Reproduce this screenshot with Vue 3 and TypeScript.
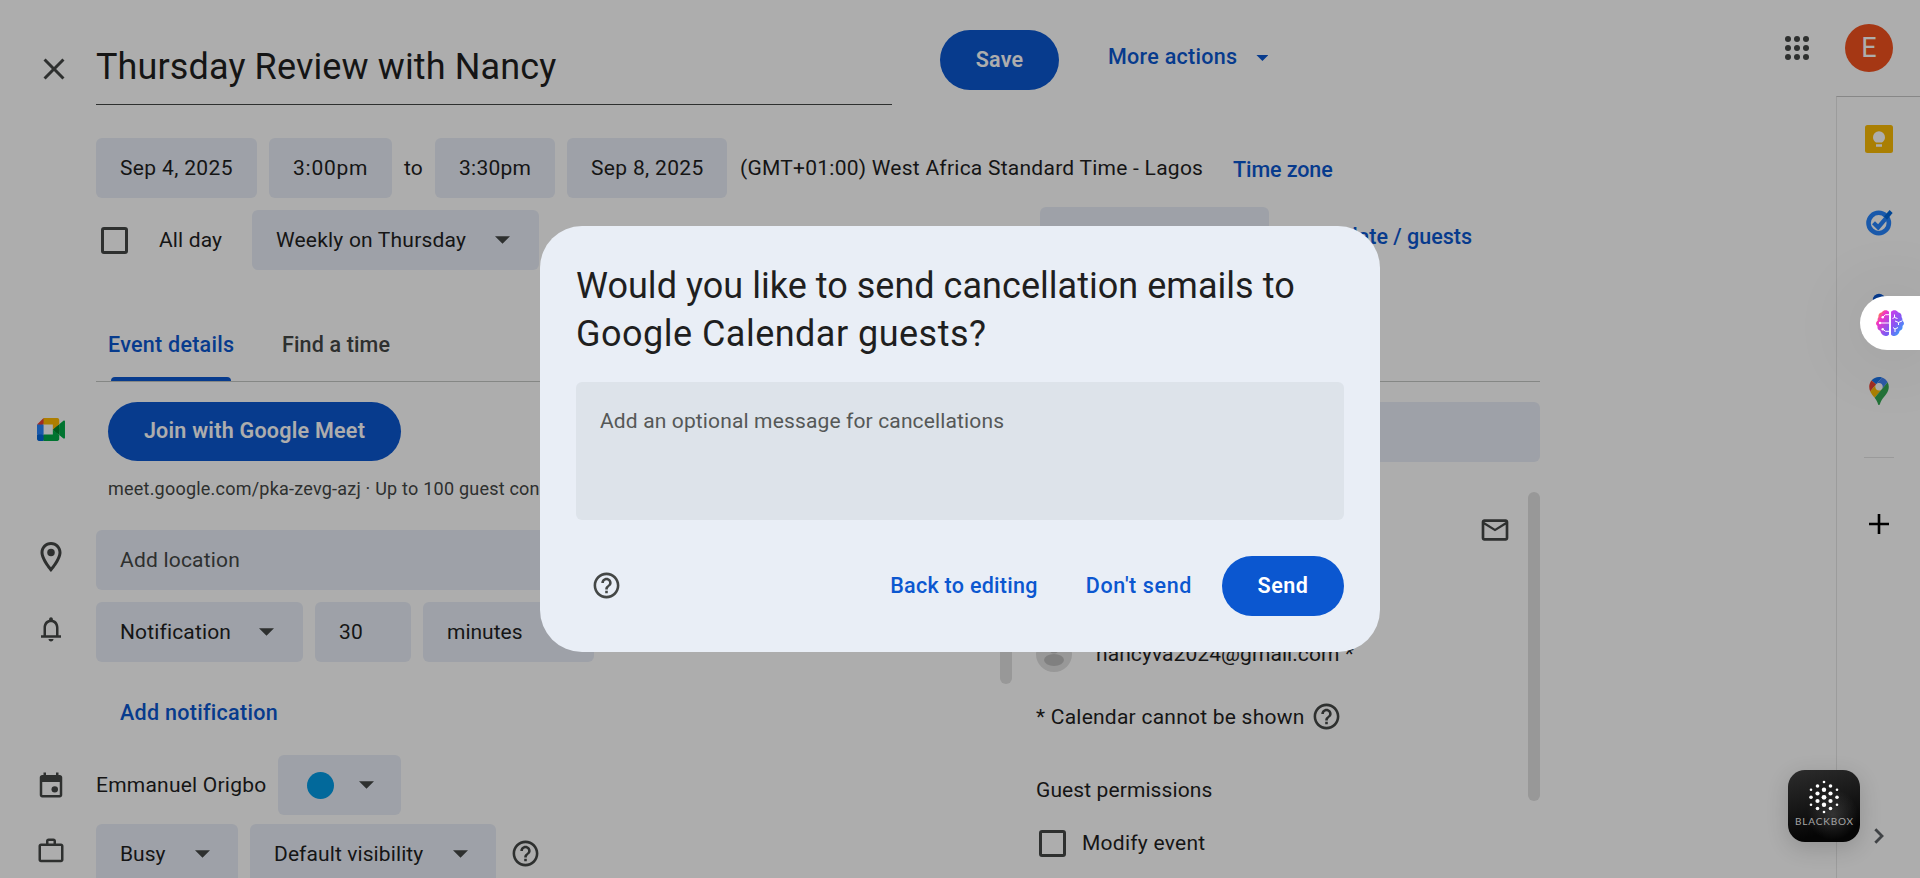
<script setup lang="ts">
import { ref } from 'vue'

const title = ref('Thursday Review with Nancy')
const message = ref('')

const HELP =
  'M11 18h2v-2h-2v2zm1-16C6.48 2 2 6.48 2 12s4.48 10 10 10 10-4.48 10-10S17.52 2 12 2zm0 18c-4.41 0-8-3.59-8-8s3.59-8 8-8 8 3.59 8 8-3.59 8-8 8zm0-14c-2.21 0-4 1.79-4 4h2c0-1.1.9-2 2-2s2 .9 2 2c0 2-3 1.75-3 5h2c0-2.25 3-2.5 3-5 0-2.21-1.79-4-4-4z'

interface Dot {
  x: number
  y: number
  r: number
}
// Hexagonal lattice whose dots grow towards the centre
const dots: Dot[] = [
  { x: 36, y: 12, r: 1.3 }, { x: 29.5, y: 16, r: 1.8 }, { x: 42.5, y: 16, r: 1.8 },
  { x: 23, y: 19.8, r: 1.3 }, { x: 36, y: 19.8, r: 2.2 }, { x: 49, y: 19.8, r: 1.3 },
  { x: 29.5, y: 23.5, r: 2.1 }, { x: 42.5, y: 23.5, r: 2.1 },
  { x: 23, y: 27.3, r: 1.8 }, { x: 36, y: 27.3, r: 2.4 }, { x: 49, y: 27.3, r: 1.8 },
  { x: 29.5, y: 31, r: 2.1 }, { x: 42.5, y: 31, r: 2.1 },
  { x: 23, y: 34.8, r: 1.3 }, { x: 36, y: 34.8, r: 2.2 }, { x: 49, y: 34.8, r: 1.3 },
  { x: 29.5, y: 38.5, r: 1.8 }, { x: 42.5, y: 38.5, r: 1.8 }, { x: 36, y: 42, r: 1.3 },
]
</script>

<template>
  <div class="page">
    <main class="editor">
      <header class="top">
        <svg class="close" viewBox="0 0 24 24"><path d="M19 6.41L17.59 5 12 10.59 6.41 5 5 6.41 10.59 12 5 17.59 6.41 19 12 13.41 17.59 19 19 17.59 13.41 12z" /></svg>
        <div class="title">{{ title }}</div>
        <button class="primary save">Save</button>
        <div class="more link"><span>More actions</span><i class="caret small"></i></div>
      </header>

      <div class="row when">
        <div class="field f-date">Sep 4, 2025</div>
        <div class="field f-start">3:00pm</div>
        <span class="to">to</span>
        <div class="field f-end">3:30pm</div>
        <div class="field f-date2">Sep 8, 2025</div>
        <span class="zone">(GMT+01:00) West Africa Standard Time - Lagos</span>
        <span class="link tz">Time zone</span>
      </div>

      <div class="row repeat">
        <i class="check"></i>
        <span class="allday">All day</span>
        <div class="field f-weekly"><span>Weekly on Thursday</span><i class="caret"></i></div>
        <div class="field f-guest-tab"></div>
        <span class="link update">Update / guests</span>
      </div>

      <nav class="tabs">
        <div class="tab active"><span>Event details</span></div>
        <div class="tab"><span>Find a time</span></div>
      </nav>

      <div class="body">
        <section class="details">
          <div class="line">
            <div class="ico meet">
              <svg viewBox="0 0 87.5 72">
                <path fill="#00832d" d="M49.5 36l8.53 9.75 11.47 7.33 2-17.02-2-16.64-11.69 6.44z" />
                <path fill="#0066da" d="M0 51.5V66c0 3.315 2.685 6 6 6h14.5l3-10.96-3-9.54-9.95-3z" />
                <path fill="#e94235" d="M20.5 0L0 20.5l10.55 3 9.95-3 2.95-9.41z" />
                <path fill="#2684fc" d="M20.5 20.5H0v31h20.5z" />
                <path fill="#00ac47" d="M82.6 8.68L69.5 19.42v33.66l13.16 10.79c1.97 1.54 4.85.135 4.85-2.37V11c0-2.535-2.945-3.925-4.91-2.32zM49.5 36v15.5h-29V72h43c3.315 0 6-2.685 6-6V53.08z" />
                <path fill="#ffba00" d="M63.5 0h-43v20.5h29V36l20-16.57V6c0-3.315-2.685-6-6-6z" />
              </svg>
            </div>
            <button class="primary join">Join with Google Meet</button>
          </div>
          <p class="meet-url">meet.google.com/pka-zevg-azj · Up to 100 guest connections</p>

          <div class="line location">
            <div class="ico pin"><svg viewBox="0 0 24 24"><path d="M12 2C8.13 2 5 5.13 5 9c0 5.25 7 13 7 13s7-7.75 7-13c0-3.87-3.13-7-7-7zM7 9c0-2.76 2.24-5 5-5s5 2.24 5 5c0 2.88-2.88 7.19-5 9.88C9.92 16.21 7 11.85 7 9z" /><circle cx="12" cy="9" r="2.5" /></svg></div>
            <div class="field f-loc">Add location</div>
          </div>

          <div class="line notify">
            <div class="ico bell"><svg viewBox="0 0 24 24"><path d="M20 17h-2v-6c0-3.07-1.63-5.64-4.5-6.32V4c0-.83-.67-1.5-1.5-1.5s-1.5.67-1.5 1.5v.68C7.64 5.36 6 7.92 6 11v6H4v2h16v-2zm-4 0H8v-6c0-2.48 1.51-4.5 4-4.5s4 2.02 4 4.5v6zM12 22c1.1 0 2-.9 2-2h-4c0 1.1.89 2 2 2z" /></svg></div>
            <div class="field f-notif"><span>Notification</span><i class="caret"></i></div>
            <div class="field f-num">30</div>
            <div class="field f-unit">minutes</div>
          </div>
          <span class="link add-notif">Add notification</span>

          <div class="line calendar">
            <div class="ico"><svg viewBox="0 0 24 24"><path d="M19 4h-1V2h-2v2H8V2H6v2H5c-1.1 0-2 .9-2 2v14c0 1.1.9 2 2 2h14c1.1 0 2-.9 2-2V6c0-1.1-.9-2-2-2zm0 16H5V9.500h14V20z" /><circle cx="15" cy="15.500" r="2.600" /></svg></div>
            <span class="owner">Emmanuel Origbo</span>
            <div class="field f-color"><i class="dot"></i><i class="caret"></i></div>
          </div>

          <div class="line busy">
            <div class="ico bag"><svg viewBox="0 0 24 24"><path d="M14 6V4h-4v2h4zM4 8v11h16V8H4zm16-2c1.110 0 2 .890 2 2v11c0 1.110-.890 2-2 2H4c-1.110 0-2-.890-2-2V8c0-1.110.890-2 2-2h4V4c0-1.110.890-2 2-2h4c1.110 0 2 .890 2 2v2h4z" /></svg></div>
            <div class="field f-busy"><span>Busy</span><i class="caret"></i></div>
            <div class="field f-vis"><span>Default visibility</span><i class="caret"></i></div>
            <svg class="help" viewBox="0 0 24 24"><path :d="HELP" /></svg>
          </div>
        </section>
        <i class="scroll left"></i>

        <section class="guests">
          <div class="field f-add"></div>
          <div class="guest-scroll">
            <div class="guest-list">
              <div class="mail"><svg viewBox="0 0 24 24"><path d="M22 6c0-1.100-.900-2-2-2H4c-1.100 0-2 .900-2 2v12c0 1.100.900 2 2 2h16c1.100 0 2-.900 2-2V6zm-2 0l-8 5-8-5h16zm0 12H4V8l8 5 8-5v10z" /></svg></div>
              <div class="guest">
                <svg class="avatar" viewBox="0 0 36 36"><circle cx="18" cy="18" r="18" fill="#e0e0e0" /><circle cx="18" cy="12" r="5.500" fill="#bdbdbd" /><ellipse cx="18" cy="24" rx="10" ry="6" fill="#bdbdbd" /></svg>
                <span>nancyva2024@gmail.com *</span>
              </div>
              <div class="note"><span>* Calendar cannot be shown</span><svg class="help" viewBox="0 0 24 24"><path :d="HELP" /></svg></div>
              <div class="perm">Guest permissions</div>
              <div class="modify"><i class="check"></i><span>Modify event</span></div>
            </div>
            <i class="scroll right"></i>
          </div>
        </section>
      </div>
    </main>

    <div class="rail">
      <div class="account">
        <svg class="apps" viewBox="0 0 24 24">
          <template v-for="y in 3" :key="y"><circle v-for="x in 3" :key="x" :cx="x * 9 - 6" :cy="y * 9 - 6" r="3" /></template>
        </svg>
        <div class="me">E</div>
      </div>
      <aside class="side">
        <svg class="app keep" viewBox="0 0 28 28"><rect width="28" height="28" rx="2.500" fill="#fbbc04" /><path fill="#fff" d="M14 6.300a6 6 0 0 0-6 6c0 2.300 1.200 4.200 3 5.200h6c1.800-1 3-2.900 3-5.200a6 6 0 0 0-6-6zM11 19.300h6v2.400h-6z" /></svg>
        <svg class="app" viewBox="0 0 28 28"><circle cx="13.700" cy="14" r="10.200" fill="none" stroke="#2684fc" stroke-width="4.600" /><path d="M8.500 13.800l4.700 4.500 8.300-9.700" fill="none" stroke="#2684fc" stroke-width="4.300" /><path d="M19 7.500L24.600 1l3 3L22 10.700z" fill="#0066da" /></svg>
        <svg class="app" viewBox="0 0 28 28"><circle cx="14" cy="7" r="6.200" fill="#0b57d0" /><path fill="#2684fc" d="M2 26c0-7 5-10 12-10s12 3 12 10z" /></svg>
        <svg class="app" viewBox="0 0 92.3 132.3">
          <path fill="#1a73e8" d="M60.2 2.2C55.8.8 51 0 46.1 0 32 0 19.3 6.4 10.8 16.5l21.800 18.300L60.200 2.200z" />
          <path fill="#ea4335" d="M10.8 16.5C4.100 24.500 0 34.900 0 46.100c0 8.700 1.700 15.700 4.600 22l28-33.300-21.800-18.300z" />
          <path fill="#4285f4" d="M46.2 28.5c9.800 0 17.700 7.900 17.700 17.700 0 4.300-1.600 8.300-4.200 11.400 0 0 13.900-16.600 27.500-32.700-5.600-10.800-15.300-19-27-22.700L32.600 34.800c3.300-3.800 8.100-6.300 13.600-6.300" />
          <path fill="#fbbc04" d="M46.2 63.800c-9.800 0-17.700-7.900-17.700-17.700 0-4.300 1.500-8.300 4.100-11.300l-28 33.300c4.800 10.600 12.800 19.200 21 29.900l34.100-40.500c-3.300 3.900-8.100 6.300-13.500 6.300" />
          <path fill="#34a853" d="M59.1 109.200c15.400-24.100 33.300-35 33.300-63 0-7.700-1.900-14.900-5.200-21.300L25.600 98c2.600 3.400 5.300 7.300 7.900 11.300 9.400 14.500 6.800 23.100 12.800 23.100s3.400-8.700 12.800-23.200" />
        </svg>
        <i class="rule"></i>
        <svg class="plus" viewBox="0 0 20 20"><path d="M10 0v20M0 10h20" /></svg>
        <svg class="chevron" viewBox="0 0 10 16"><path d="M1.300 1.200L8 8l-6.700 6.800" /></svg>
      </aside>
    </div>

    <div class="scrim">
      <div class="dialog">
        <h2><span class="l1">Would you like to send cancellation emails to</span> <span class="l2">Google Calendar guests?</span></h2>
        <textarea v-model="message" class="message" placeholder="Add an optional message for cancellations"></textarea>
        <div class="actions">
          <svg class="help" viewBox="0 0 24 24"><path :d="HELP" /></svg>
          <span class="link back">Back to editing</span>
          <span class="link dont">Don't send</span>
          <button class="primary send">Send</button>
        </div>
      </div>
    </div>

    <div class="brain">
      <svg viewBox="0 0 28 26">
        <defs>
          <linearGradient id="bl" x1="0" y1="0" x2=".7" y2="1"><stop offset="0" stop-color="#ffa01e" /><stop offset=".15" stop-color="#ff8a3c" /><stop offset=".4" stop-color="#f233c8" /><stop offset="1" stop-color="#7a5cf5" /></linearGradient>
          <linearGradient id="br" x1="0" y1="0" x2=".7" y2="1"><stop offset="0" stop-color="#d13bea" /><stop offset=".5" stop-color="#8a55f2" /><stop offset="1" stop-color="#2fa4fb" /></linearGradient>
        </defs>
        <path fill="url(#bl)" d="M13 1.800C11.500-.4 7.500-.4 6 2.200 3.500 2.500 2 4.700 2.500 7 1.600 8 1.400 9.300 1.700 10.400-.5 12-.5 14.600 1.500 16c-.4 2.500.8 4.300 2.800 4.800C5 24 7 26 9.600 26c1.400 0 2.600-.5 3.400-1.600z" />
        <path fill="url(#br)" d="M15 1.800c1.500-2.200 5.500-2.200 7 .4 2.500.3 4 2.500 3.500 4.800.9 1 1.100 2.300.8 3.400 2.200 1.600 2.200 4.200.2 5.600.4 2.500-.8 4.300-2.800 4.800C23 24 21 26 18.400 26c-1.400 0-2.600-.5-3.400-1.600z" />
        <g fill="none" stroke="#fff" stroke-width="1"><path d="M13 4.700H9.500L7 7M13 13H4M13 21.300H9.500L7 19.300M18.500 4.500v3l-2 1M18.500 7.500l3 1M19 11l3.500 1.500L26 11M22.500 12.500V15M17 17.500l2 1.500 3-1.500M19 19v3" /></g>
        <g fill="#fff"><circle cx="6.700" cy="7.200" r="1.200" /><circle cx="4" cy="13" r="1.200" /><circle cx="6.700" cy="19.200" r="1.200" /></g>
      </svg>
    </div>

    <div class="blackbox">
      <svg viewBox="0 0 72 72">
        <circle v-for="(d, i) in dots" :key="i" :cx="d.x" :cy="d.y" :r="d.r" fill="#fff" />
        <text x="7" y="55" textLength="58">BLACKBOX</text>
      </svg>
    </div>
  </div>
</template>

<style>
body {
  margin: 0;
  overflow: hidden;
}
</style>

<style scoped>
.page {
  position: relative;
  display: flex;
  justify-content: space-between;
  width: 1920px;
  height: 878px;
  overflow: hidden;
  background: #fff;
  color: #1f1f1f;
  font-family: Roboto, "Open Sans", sans-serif;
  font-size: 21px;
  line-height: 24px;
  letter-spacing: 0.14px;
  white-space: nowrap;
}
.page * {
  box-sizing: border-box;
}
i {
  display: block;
  flex: none;
}
svg {
  display: block;
  flex: none;
  fill: #444746;
}
.editor {
  width: 1540px;
  flex: none;
}
.top {
  display: flex;
  height: 138px;
  padding-left: 36px;
}
.close {
  width: 36px;
  height: 36px;
  margin: 51px 24px 0 0;
}
.title {
  width: 796px;
  height: 62px;
  margin-top: 43px;
  border-bottom: 1px solid #444746;
  font-size: 36px;
  line-height: 48px;
  letter-spacing: 0.12px;
}
.primary {
  border: 0;
  padding: 0;
  height: 60px;
  border-radius: 30px;
  background: #0b57d0;
  color: #fff;
  font: 600 21.5px/24px Roboto, "Open Sans", sans-serif;
  letter-spacing: 0.25px;
}
.save {
  width: 119px;
  margin: 30px 49px 0 48px;
}
.link {
  color: #0b57d0;
  font-size: 21.5px;
  font-weight: 500;
  letter-spacing: 0.29px;
}
.more {
  display: flex;
  align-items: center;
  height: 24px;
  margin-top: 45px;
}
.more .caret {
  width: 12px;
  height: 6px;
  margin: 2px 0 0 19px;
  background: #0b57d0;
}
.caret {
  width: 15px;
  height: 7.5px;
  background: #444746;
  clip-path: polygon(0 0, 100% 0, 50% 100%);
}
.row {
  display: flex;
  align-items: center;
  height: 60px;
  padding-left: 96px;
}
.field {
  display: flex;
  align-items: center;
  flex: none;
  height: 60px;
  padding: 0 24px;
  border-radius: 6px;
  background: #e9eef8;
}
.f-date { width: 161px; margin-right: 12px; letter-spacing: 0.35px; }
.f-start { width: 123px; letter-spacing: 0.75px; }
.to { width: 43px; padding-left: 12px; }
.f-end { width: 120px; margin-right: 12px; letter-spacing: 0.25px; }
.f-date2 { width: 160px; letter-spacing: 0.33px; }
.zone { width: 506px; padding-left: 13px; letter-spacing: 0.25px; }
.tz { margin-top: 4px; letter-spacing: -0.1px; }
.repeat {
  margin-top: 12px;
}
.check {
  width: 27px;
  height: 27px;
  border: 3px solid #444746;
  border-radius: 3px;
}
.repeat .check {
  margin: 0 31px 0 5px;
}
.allday {
  width: 93px;
}
.f-weekly {
  width: 287px;
  padding-right: 29px;
  justify-content: space-between;
  letter-spacing: 0.2px;
}
.f-guest-tab {
  width: 229px;
  margin: -6px 0 0 501px;
}
.update {
  width: 203px;
  margin-top: -6px;
  text-align: right;
  letter-spacing: 0;
}
.tabs {
  display: flex;
  height: 62px;
  margin: 50px 0 0 96px;
  padding-left: 12px;
  border-bottom: 1px solid #c4c7c5;
}
.tab {
  display: flex;
  flex-direction: column;
  justify-content: space-between;
  margin-right: 48px;
  padding-top: 13px;
  color: #444746;
  font-size: 21.5px;
  font-weight: 500;
  letter-spacing: 0.14px;
}
.tab.active {
  width: 126px;
  color: #0b57d0;
  letter-spacing: 0.27px;
}
.tab.active::after {
  content: "";
  height: 4px;
  margin: 0 3px;
  border-radius: 4px 4px 0 0;
  background: #0b57d0;
}
.body {
  display: flex;
  padding-top: 20px;
}
.details {
  width: 1000px;
  flex: none;
}
.line {
  display: flex;
  align-items: center;
  height: 60px;
}
.ico {
  display: flex;
  flex: none;
  width: 96px;
  padding: 0 13px 0 19px;
}
.ico svg {
  width: 30px;
  height: 30px;
  margin-left: 17px;
}
.line:first-child {
  height: 59px;
}
.ico.meet svg {
  width: 28px;
  height: 23px;
  margin: -5px 0 0 18px;
}
.join {
  width: 293px;
  height: 59px;
  margin-left: 12px;
  padding-bottom: 1px;
}
.meet-url {
  margin: 16px 0 29px 108px;
  color: #444746;
  font-size: 18px;
  letter-spacing: 0.22px;
}
.ico.pin svg {
  width: 36px;
  height: 36px;
  margin: -6px 0 0 14px;
}
.f-loc {
  width: 876px;
  color: #444746;
  letter-spacing: 0.2px;
}
.notify {
  margin-top: 12px;
  gap: 12px;
}
.notify .ico {
  margin-right: -12px;
}
.ico.bell svg {
  margin-top: -6px;
}
.f-notif { width: 207px; padding-right: 29px; justify-content: space-between; }
.f-num { width: 96px; }
.f-unit { width: 171px; letter-spacing: 0; }
.add-notif {
  display: block;
  margin: 39px 0 30px 120px;
}
.owner {
  width: 182px;
  letter-spacing: 0.22px;
}
.f-color {
  width: 123px;
  padding: 0 27px 0 29px;
  justify-content: space-between;
}
.dot {
  width: 27px;
  height: 27px;
  border-radius: 50%;
  background: #039be5;
}
.busy {
  margin-top: 9px;
}
.ico.bag svg {
  margin-top: -7px;
}
.f-busy { width: 142px; margin-right: 12px; padding-right: 28px; justify-content: space-between; letter-spacing: 0; }
.f-vis { width: 246px; margin-right: 14px; padding-right: 28px; justify-content: space-between; letter-spacing: 0.1px; }
.help {
  width: 31px;
  height: 31px;
}
.busy .help {
  margin-top: -1px;
}
.scroll {
  width: 12px;
  border-radius: 6px;
  background: #e0e0e0;
}
.scroll.left {
  height: 282px;
}
.guests {
  width: 504px;
  margin-left: 24px;
}
.guest-scroll {
  display: flex;
  justify-content: space-between;
  margin-top: 30px;
}
.scroll.right {
  height: 309px;
}
.guest-list {
  width: 480px;
  padding-top: 22px;
}
.mail {
  display: flex;
  justify-content: flex-end;
  padding-right: 5px;
}
.mail svg {
  width: 32px;
  height: 32px;
}
.guest {
  display: flex;
  align-items: center;
  margin-top: 90px;
}
.guest span {
  margin-left: 24px;
  letter-spacing: 0.08px;
}
.avatar {
  width: 36px;
  height: 36px;
}
.note {
  display: flex;
  align-items: center;
  gap: 6px;
  margin-top: 29px;
  letter-spacing: 0.24px;
}
.perm {
  margin-top: 46px;
  letter-spacing: 0.1px;
}
.modify {
  display: flex;
  align-items: flex-start;
  margin: 28px 0 0 3px;
  letter-spacing: 0.26px;
}
.modify span {
  margin: 1px 0 0 16px;
}
.rail {
  display: flex;
  flex-direction: column;
  align-items: flex-end;
  width: 200px;
}
.account {
  display: flex;
  align-items: center;
  height: 96px;
  padding-right: 27px;
}
.apps {
  width: 24px;
  height: 24px;
  margin-right: 36px;
}
.me {
  width: 48px;
  height: 48px;
  border-radius: 50%;
  background: #f4511e;
  color: #fff;
  font-size: 27px;
  line-height: 49px;
  text-align: center;
}
.side {
  display: flex;
  flex-direction: column;
  align-items: center;
  width: 84px;
  flex: 1;
  padding-top: 28px;
  border-top: 1px solid #c7c7c7;
  border-left: 1px solid #e6e6e6;
}
.app {
  width: 28px;
  height: 28px;
  margin-bottom: 56px;
}
.rule {
  width: 30px;
  height: 1px;
  margin-top: -4px;
  background: #e3e3e3;
}
.plus {
  width: 20px;
  height: 20px;
  margin-top: 56px;
  fill: none;
  stroke: #000;
  stroke-width: 2.6;
}
.chevron {
  width: 10px;
  height: 16px;
  margin-top: 294px;
  fill: none;
  stroke: #5f6368;
  stroke-width: 2.8;
}
.scrim {
  position: absolute;
  inset: 0;
  display: flex;
  align-items: center;
  justify-content: center;
  background: rgba(0, 0, 0, 0.32);
}
.dialog {
  width: 840px;
  height: 426px;
  padding: 36px;
  border-radius: 42px;
  background: #e9eef6;
}
h2 {
  margin: 0;
  font-size: 36px;
  font-weight: 400;
  line-height: 48px;
}
.l1,
.l2 {
  display: block;
}
.l1 {
  letter-spacing: 0.03px;
}
.l2 {
  letter-spacing: 0.48px;
}
.message {
  display: block;
  width: 768px;
  height: 138px;
  margin-top: 24px;
  padding: 27px 24px 24px;
  border: 0;
  border-radius: 6px;
  outline: 0;
  resize: none;
  background: #dde3ea;
  color: #1f1f1f;
  font: 400 21px/24px Roboto, "Open Sans", sans-serif;
  letter-spacing: 0.14px;
}
.message::placeholder {
  color: #555857;
  opacity: 1;
}
.actions {
  display: flex;
  align-items: center;
  height: 60px;
  margin-top: 36px;
}
.actions .help {
  margin: -1px 0 0 15px;
}
.back {
  margin-left: auto;
}
.dont {
  margin: 0 30px 0 48px;
  letter-spacing: 0.62px;
}
.send {
  width: 122px;
  letter-spacing: 0.5px;
}
.brain {
  position: absolute;
  right: 0;
  top: 296px;
  width: 60px;
  height: 54px;
  padding: 14px 16px;
  border-radius: 27px 0 0 27px;
  background: #fff;
  box-shadow: 0 4px 80px rgba(0, 0, 0, 0.12);
}
.brain svg {
  width: 28px;
  height: 26px;
}
.blackbox {
  position: absolute;
  left: 1788px;
  top: 770px;
  width: 72px;
  height: 72px;
  border-radius: 17px;
  background:
    radial-gradient(ellipse at 62% 62%, rgba(130, 130, 130, 0.32), transparent 40%),
    linear-gradient(165deg, #2c2c2c 0%, #171717 45%, #050505 80%);
  box-shadow: 0 6px 22px rgba(0, 0, 0, 0.16);
}
.blackbox text {
  fill: #a5a5a5;
  font-family: Lato, sans-serif;
  font-size: 10px;
  letter-spacing: 0;
}
</style>
